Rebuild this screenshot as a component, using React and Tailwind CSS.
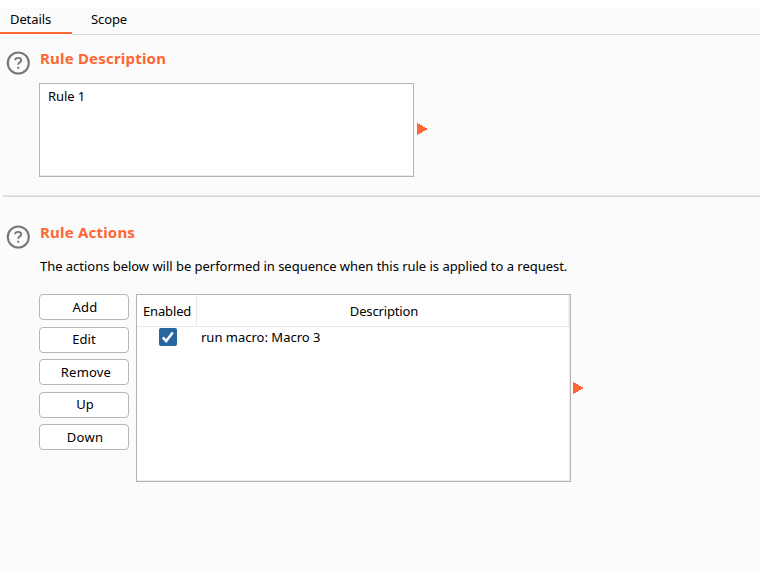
function HelpIcon() {
  return (
    <svg width="24" height="24" viewBox="0 0 24 24" fill="none" className="block">
      <circle cx="12.3" cy="12" r="10.5" stroke="#777777" strokeWidth="2.1" />
      <path
        d="M9.2 9.3 C9.2 7.7 10.5 6.9 12.2 6.9 C14 6.9 15.2 7.9 15.2 9.4 C15.2 11.4 12.2 11.4 12.2 13.7"
        stroke="#777777"
        strokeWidth="1.9"
      />
      <rect x="11.2" y="15.8" width="2" height="2" fill="#777777" />
    </svg>
  );
}

function Arrow() {
  return (
    <svg width="11" height="12" viewBox="0 0 11 12" shapeRendering="crispEdges" className="block">
      <path d="M0 0 L10.9 6 L0 12 Z" fill="#ff6633" />
    </svg>
  );
}

function Button({ className = "", children }) {
  return (
    <button
      className={`flex h-[26px] w-[90px] items-center justify-center rounded-[4px] border border-[#bab5b5] bg-white leading-none ${className}`}
    >
      {children}
    </button>
  );
}

export default function App() {
  return (
    <div className="h-[573px] w-[760px] overflow-hidden bg-[#fbfbfb] font-['Noto_Sans','Open_Sans',sans-serif] text-[13px] text-black">
      <div className="h-[7px] bg-white" />
      <nav className="flex h-[28px] leading-[25px]">
        <div className="h-[27px] w-[72px] border-b-[2px] border-[#ff6633] pl-[10px]">
          <span className="tracking-[-0.1px]">Details</span>
        </div>
        <div className="flex-1 border-b border-[#dadada] pl-[19px]">
          <span className="tracking-[-0.1px]">Scope</span>
        </div>
      </nav>

      <section className="flex h-[160px] pl-[6px]">
        <div className="w-[33px] pt-[16px]">
          <HelpIcon />
        </div>
        <div>
          <h2 className="h-[48px] pl-px pt-[13px] text-[15px] font-bold leading-[20px] text-[#ff6633]">
            <span className="tracking-[0.2px]">Rule Description</span>
          </h2>
          <div className="flex gap-[3px]">
            <div className="h-[94px] w-[375px] border border-[#b4b4b4] bg-white pl-[8px] pt-[2px] leading-[20px] shadow-[inset_0_-1px_0_#e9e9e9]">
              <span className="tracking-[-0.1px]">Rule 1</span>
            </div>
            <div className="pt-[40px]">
              <Arrow />
            </div>
          </div>
        </div>
      </section>

      <hr className="ml-[3px] h-[2px] border-0 border-t border-[#e4e4e4] bg-[#d8d8d8]" />

      <section className="flex pl-[6px]">
        <div className="w-[33px] pt-[28px]">
          <HelpIcon />
        </div>
        <div>
          <h2 className="h-[59px] pl-px pt-[25px] text-[15px] font-bold leading-[20px] text-[#ff6633]">
            <span className="tracking-[0.2px]">Rule Actions</span>
          </h2>
          <p className="h-[38px] pl-px leading-[20px]">
            <span className="tracking-[-0.03px]">
              The actions below will be performed in sequence when this rule is applied to a request.
            </span>
          </p>
          <div className="flex">
            <div className="flex w-[97px] flex-col">
              <Button className="mb-[7px] pl-[2px] tracking-[0.3px]">Add</Button>
              <Button className="mb-[6px] pb-px">Edit</Button>
              <Button className="mb-[7px] pl-[4px] tracking-[0.2px]">Remove</Button>
              <Button className="mb-[6px] pb-px pl-[2px]">Up</Button>
              <Button className="pl-[2px] tracking-[0.3px]">Down</Button>
            </div>
            <div className="h-[188px] w-[435px] border border-[#b8b3b3] bg-white shadow-[inset_-1px_-1px_0_#ececec]">
              <div className="mr-px flex h-[32px] border-b border-r border-[#e9e9e9] leading-[32px]">
                <div className="w-[60px] border-r border-[#e9e9e9] pl-[6px]">
                  <span className="tracking-[-0.15px]">Enabled</span>
                </div>
                <div className="flex-1 pl-[3px] text-center">
                  <span className="tracking-[-0.15px]">Description</span>
                </div>
              </div>
              <div className="flex">
                <div className="w-[64px] pl-[22px] pt-px">
                  <svg width="18" height="18" viewBox="0 0 18 18" className="block">
                    <rect width="18" height="18" rx="2" fill="#26659f" />
                    <path d="M3.8 9.3 L7.2 13 L13.8 4.5" fill="none" stroke="white" strokeWidth="2.5" />
                  </svg>
                </div>
                <span className="leading-[20px]">run macro: Macro 3</span>
              </div>
            </div>
            <div className="ml-[2px] mt-[88px]">
              <Arrow />
            </div>
          </div>
        </div>
      </section>
    </div>
  );
}
